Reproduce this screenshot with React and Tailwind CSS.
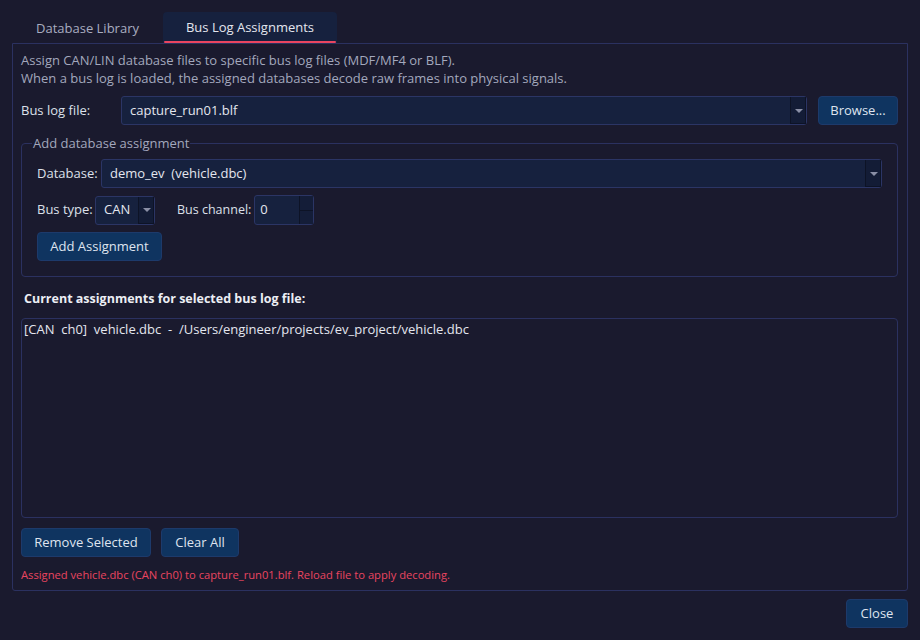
const FONT = { fontFamily: '"Open Sans", "Noto Sans", sans-serif' };

function ComboArrow() {
  return (
    <div className="flex w-[16px] items-center justify-center self-stretch border-l border-[#0d1326] bg-[#131c36] shadow-[inset_-1px_-1px_0_#0d1326]">
      <span className="block h-0 w-0 border-x-[4px] border-t-[4px] border-x-transparent border-t-[#8a8fa6]" />
    </div>
  );
}

function Combo({ value, className }) {
  return (
    <div className={`flex h-[29px] items-stretch rounded-[3px] border border-[#2b3565] bg-[#16213e] ${className}`}>
      <div className="flex flex-1 items-center whitespace-pre pl-[8px] text-[#e4e6ee]">{value}</div>
      <ComboArrow />
    </div>
  );
}

function Btn({ children, className = '' }) {
  return (
    <button className={`flex h-[29px] items-center justify-center whitespace-nowrap rounded-[4px] border border-[#1d3a6b] bg-[#0f3460] text-[#dfe4ef] ${className}`}>
      {children}
    </button>
  );
}

export default function App() {
  return (
    <div className="flex h-[640px] w-[920px] flex-col bg-[#1a1a2e] text-[13px] text-[#dde0ea]" style={FONT}>
      {/* tabs */}
      <div className="flex h-[43px] items-end pl-[12px]">
        <div className="flex h-[31px] w-[151px] items-center justify-center pt-[2px] text-[#a9adc0]">Database Library</div>
        <div className="flex h-[31px] w-[174px] flex-col rounded-t-[4px] bg-[#16213e]">
          <div className="flex flex-1 items-center justify-center pt-[3px] text-[#e4e6ee]">Bus Log Assignments</div>
          <div className="mx-[1px] h-[2px] rounded-full bg-[#e94560]" />
        </div>
      </div>

      {/* pane */}
      <div className="mx-[12px] flex h-[548px] flex-col rounded-b-[3px] border border-[#2b3160] pl-[8px] pr-[9px] pt-[7px]">
        <div className="leading-[18px] text-[#a3a8bd]">
          <p>Assign CAN/LIN database files to specific bus log files (MDF/MF4 or BLF).</p>
          <p>When a bus log is loaded, the assigned databases decode raw frames into physical signals.</p>
        </div>

        <div className="mt-[9px] flex items-center">
          <span className="w-[100px]">Bus log file:</span>
          <Combo value="capture_run01.blf" className="flex-1" />
          <Btn className="ml-[11px] w-[80px]">Browse...</Btn>
        </div>

        <fieldset className="mt-[9px] rounded-[4px] border border-[#2b3160] px-[15px] pb-[15px]">
          <legend className="-ml-[5px] px-[1px] leading-[18px] text-[#a3a8bd]">Add database assignment</legend>
          <div className="mt-[7px] flex items-center">
            <span className="w-[64px]">Database:</span>
            <Combo value="demo_ev  (vehicle.dbc)" className="flex-1" />
          </div>
          <div className="mt-[7px] flex items-center whitespace-nowrap">
            <span className="w-[58px]">Bus type:</span>
            <Combo value="CAN" className="w-[60px]" />
            <span className="ml-[22px] mr-[3px] text-[12.5px]">Bus channel:</span>
            <div className="flex h-[30px] w-[60px] items-stretch rounded-[3px] border border-[#2b3565] bg-[#16213e]">
              <div className="flex flex-1 items-center pl-[5px] text-[#e4e6ee]">0</div>
              <div className="flex w-[14px] flex-col border-l border-[#0d1326]">
                <div className="flex-1 border-b border-[#0d1326] bg-[#141d38]" />
                <div className="flex-1 bg-[#141d38]" />
              </div>
            </div>
          </div>
          <Btn className="mt-[7px] w-[125px]">Add Assignment</Btn>
        </fieldset>

        <p className="mt-[13px] pl-[3px] text-[12.5px] font-bold leading-[18px] text-[#eceef4]">Current assignments for selected bus log file:</p>

        <div className="mt-[10px] h-[200px] whitespace-pre rounded-[4px] border border-[#2b3160] px-[2px] pt-[1px] leading-[18px] text-[#e4e6ee]">
          {'[CAN  ch0]  vehicle.dbc  -  /Users/engineer/projects/ev_project/vehicle.dbc'}
        </div>

        <div className="mt-[10px] flex gap-[10px]">
          <Btn className="w-[130px]">Remove Selected</Btn>
          <Btn className="w-[78px]">Clear All</Btn>
        </div>

        <p className="mt-[10px] text-[11.2px] leading-[16px] text-[#e94560]">
          Assigned vehicle.dbc (CAN ch0) to capture_run01.blf. Reload file to apply decoding.
        </p>
      </div>

      <div className="flex justify-end pr-[12px] pt-[8px]">
        <Btn className="w-[62px]">Close</Btn>
      </div>
    </div>
  );
}
